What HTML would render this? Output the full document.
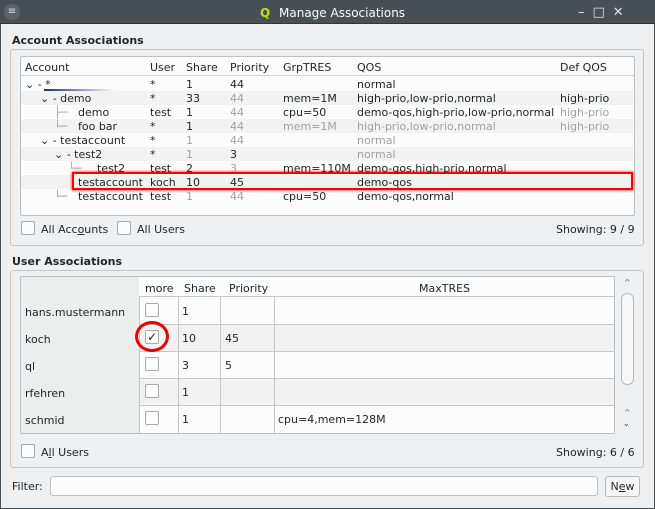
<!DOCTYPE html>
<html><head><style>
*{box-sizing:border-box;margin:0;padding:0}
body{width:655px;height:509px;background:#eff0f1;font-family:"DejaVu Sans","Liberation Sans",sans-serif;font-size:11px;color:#232627;position:relative;overflow:hidden}
.a{position:absolute;white-space:nowrap}
.title{left:0;top:0;width:655px;height:24px;background:#475057;border-bottom:1px solid #30363a;color:#fcfcfc;font-size:12px}
.frame{border:1px solid #c4c6c8;border-radius:3px}
.box{background:#fcfcfc;border:1px solid #bcbebf;border-radius:2px}
.g{color:#a0a2a4}
.r{position:absolute;left:21px;width:612px;height:14px}
.cb{position:absolute;width:14px;height:14px;border:1px solid #a8aaac;border-radius:2px;background:#fcfcfc}
b{font-weight:bold}
</style></head><body>
<div class="a title">
 <div class="a" style="left:4px;top:4px;width:16px;height:16px;border-radius:8px;background:#5b646a;color:#dde;font-size:10px;text-align:center;line-height:16px">≡</div>
 <div class="a" style="left:260px;top:6px;color:#c8e000;font-weight:bold;font-size:12px">Q</div>
 <div class="a" style="left:279px;top:6px">Manage Associations</div>
 <div class="a" style="left:578px;top:5px;width:62px;height:16px;font-size:13px;color:#e0e0e0;letter-spacing:8px">–□✕</div>
</div>
<div class="a" style="left:12px;top:34px"><b>Account Associations</b></div>
<div class="a frame" style="left:10px;top:49px;width:634px;height:197px"></div>
<div class="a box" style="left:20px;top:56px;width:615px;height:160px"></div>
<div class="a" style="left:21px;top:57px;width:613px;height:19px;border-bottom:1px solid #d0d2d3"></div>
<div class="a" style="top:61px;left:25px">Account</div>
<div class="a" style="top:61px;left:150px">User</div>
<div class="a" style="top:61px;left:186px">Share</div>
<div class="a" style="top:61px;left:230px">Priority</div>
<div class="a" style="top:61px;left:283px">GrpTRES</div>
<div class="a" style="top:61px;left:357px">QOS</div>
<div class="a" style="top:61px;left:560px">Def QOS</div>
<div class="a" style="left:44px;width:72px;height:2px;background:linear-gradient(90deg,#1d2e80,#fff);top:89px"></div>
<div class="r" style="top:91px;background:#f2f2f2"></div>
<div class="r" style="top:119px;background:#f2f2f2"></div>
<div class="r" style="top:147px;background:#f2f2f2"></div>
<div class="r" style="top:175px;background:#f2f2f2"></div>
<div class="a" style="left:72px;top:172px;width:561px;height:18px;border:2px solid #f00;box-shadow:0 0 3px #f00"></div>
<div style="position:absolute;left:0;top:78px;line-height:14px">
<div class="a" style="top:0;left:25px">⌄ - *</div><div class="a" style="top:0;left:150px">*</div><div class="a" style="top:0;left:186px">1</div><div class="a" style="top:0;left:230px">44</div><div class="a" style="top:0;left:357px">normal</div>
<div class="a" style="top:14px;left:40px">⌄ - demo</div><div class="a" style="top:14px;left:150px">*</div><div class="a" style="top:14px;left:186px">33</div><div class="a g" style="top:14px;left:230px">44</div><div class="a" style="top:14px;left:283px">mem=1M</div><div class="a" style="top:14px;left:357px">high-prio,low-prio,normal</div><div class="a" style="top:14px;left:560px">high-prio</div>
<div class="a g" style="top:28px;left:54px">├─</div><div class="a" style="top:28px;left:78px">demo</div><div class="a" style="top:28px;left:150px">test</div><div class="a" style="top:28px;left:186px">1</div><div class="a g" style="top:28px;left:230px">44</div><div class="a" style="top:28px;left:283px">cpu=50</div><div class="a" style="top:28px;left:357px">demo-qos,high-prio,low-prio,normal</div><div class="a g" style="top:28px;left:560px">high-prio</div>
<div class="a g" style="top:42px;left:54px">└─</div><div class="a" style="top:42px;left:78px">foo bar</div><div class="a" style="top:42px;left:150px">*</div><div class="a" style="top:42px;left:186px">1</div><div class="a g" style="top:42px;left:230px">44</div><div class="a g" style="top:42px;left:283px">mem=1M</div><div class="a g" style="top:42px;left:357px">high-prio,low-prio,normal</div><div class="a g" style="top:42px;left:560px">high-prio</div>
<div class="a" style="top:56px;left:40px">⌄ - testaccount</div><div class="a" style="top:56px;left:150px">*</div><div class="a g" style="top:56px;left:186px">1</div><div class="a g" style="top:56px;left:230px">44</div><div class="a g" style="top:56px;left:357px">normal</div>
<div class="a" style="top:70px;left:54px">⌄ - test2</div><div class="a" style="top:70px;left:150px">*</div><div class="a g" style="top:70px;left:186px">1</div><div class="a" style="top:70px;left:230px">3</div><div class="a g" style="top:70px;left:357px">normal</div>
<div class="a g" style="top:84px;left:68px">└─</div><div class="a" style="top:84px;left:97px">test2</div><div class="a" style="top:84px;left:150px">test</div><div class="a" style="top:84px;left:186px">2</div><div class="a g" style="top:84px;left:230px">3</div><div class="a" style="top:84px;left:283px">mem=110M</div><div class="a" style="top:84px;left:357px">demo-qos,high-prio,normal</div>
<div class="a" style="top:98px;left:78px">testaccount</div><div class="a" style="top:98px;left:150px">koch</div><div class="a" style="top:98px;left:186px">10</div><div class="a" style="top:98px;left:230px">45</div><div class="a" style="top:98px;left:357px">demo-qos</div>
<div class="a g" style="top:112px;left:54px">└─</div><div class="a" style="top:112px;left:78px">testaccount</div><div class="a" style="top:112px;left:150px">test</div><div class="a g" style="top:112px;left:186px">1</div><div class="a g" style="top:112px;left:230px">44</div><div class="a" style="top:112px;left:283px">cpu=50</div><div class="a" style="top:112px;left:357px">demo-qos,normal</div>
</div>
<div class="cb" style="left:21px;top:221px"></div><div class="a" style="left:41px;top:223px">All Acc<u>o</u>unts</div>
<div class="cb" style="left:117px;top:221px"></div><div class="a" style="left:137px;top:223px">All Users</div>
<div class="a" style="left:556px;top:223px">Showing: 9 / 9</div>
<div class="a" style="left:12px;top:255px"><b>User Associations</b></div>
<div class="a frame" style="left:10px;top:270px;width:634px;height:198px"></div>
<div class="a box" style="left:20px;top:276px;width:595px;height:158px"></div>
<div class="a" style="left:21px;top:277px;width:118px;height:156px;background:#eceded"></div>
<div class="a" style="left:139px;top:297px;width:475px;height:136px;background:#fcfcfc"></div>
<div class="a" style="left:139px;top:324px;width:475px;height:27px;background:#f2f2f2"></div>
<div class="a" style="left:139px;top:378px;width:475px;height:27px;background:#f2f2f2"></div>
<div style="position:absolute;left:0;top:0">
<div class="a" style="left:139px;top:296px;width:475px;height:1px;background:#c4c6c8"></div>
<div class="a" style="left:139px;top:324px;width:475px;height:1px;background:#c4c6c8"></div>
<div class="a" style="left:139px;top:351px;width:475px;height:1px;background:#c4c6c8"></div>
<div class="a" style="left:139px;top:378px;width:475px;height:1px;background:#c4c6c8"></div>
<div class="a" style="left:139px;top:405px;width:475px;height:1px;background:#c4c6c8"></div>
<div class="a" style="left:139px;top:297px;width:1px;height:136px;background:#c4c6c8"></div>
<div class="a" style="left:178px;top:297px;width:1px;height:136px;background:#c4c6c8"></div>
<div class="a" style="left:220px;top:297px;width:1px;height:136px;background:#c4c6c8"></div>
<div class="a" style="left:274px;top:297px;width:1px;height:136px;background:#c4c6c8"></div>
</div>
<div class="a" style="left:145px;top:282px">more</div><div class="a" style="left:184px;top:282px">Share</div><div class="a" style="left:229px;top:282px">Priority</div><div class="a" style="left:419px;top:282px">MaxTRES</div>
<div class="a" style="left:25px;top:306px">hans.mustermann</div>
<div class="a" style="left:25px;top:333px">koch</div>
<div class="a" style="left:25px;top:360px">ql</div>
<div class="a" style="left:25px;top:387px">rfehren</div>
<div class="a" style="left:25px;top:414px">schmid</div>
<div class="cb" style="left:145px;top:303px"></div><div class="a" style="left:182px;top:305px">1</div>
<div class="cb" style="left:145px;top:330px;text-align:center;line-height:12px;font-size:12px;font-weight:bold">✓</div>
<div class="a" style="left:135px;top:321px;width:34px;height:31px;border:3px solid #e00;border-radius:50%"></div>
<div class="a" style="left:182px;top:332px">10</div><div class="a" style="left:225px;top:332px">45</div>
<div class="cb" style="left:145px;top:357px"></div><div class="a" style="left:182px;top:359px">3</div><div class="a" style="left:225px;top:359px">5</div>
<div class="cb" style="left:145px;top:384px"></div><div class="a" style="left:182px;top:386px">1</div>
<div class="cb" style="left:145px;top:411px"></div><div class="a" style="left:182px;top:413px">1</div><div class="a" style="left:278px;top:413px">cpu=4,mem=128M</div>
<div class="a" style="left:621px;top:293px;width:13px;height:92px;border:1px solid #b8babb;border-radius:6px;background:#f6f6f6"></div>
<div class="a" style="left:624px;top:278px;font-size:8px;color:#666">^</div>
<div class="a" style="left:624px;top:408px;font-size:8px;color:#666">^</div>
<div class="a" style="left:623px;top:419px;font-size:8px;color:#333">⌄</div>
<div class="cb" style="left:21px;top:444px"></div><div class="a" style="left:41px;top:446px">A<u>l</u>l Users</div>
<div class="a" style="left:556px;top:446px">Showing: 6 / 6</div>
<div class="a" style="left:12px;top:480px">Filter:</div>
<div class="a box" style="left:50px;top:476px;width:548px;height:20px;border-radius:3px"></div>
<div class="a" style="left:605px;top:476px;width:35px;height:21px;border:1px solid #b8babb;border-radius:3px;background:#f6f6f6;text-align:center;line-height:19px">N<u>e</u>w</div>
<div class="a" style="left:0;top:24px;width:1px;height:485px;background:#475057"></div>
<div class="a" style="left:654px;top:24px;width:1px;height:485px;background:#475057"></div>
<div class="a" style="left:0;top:508px;width:655px;height:1px;background:#475057"></div>
</body></html>
